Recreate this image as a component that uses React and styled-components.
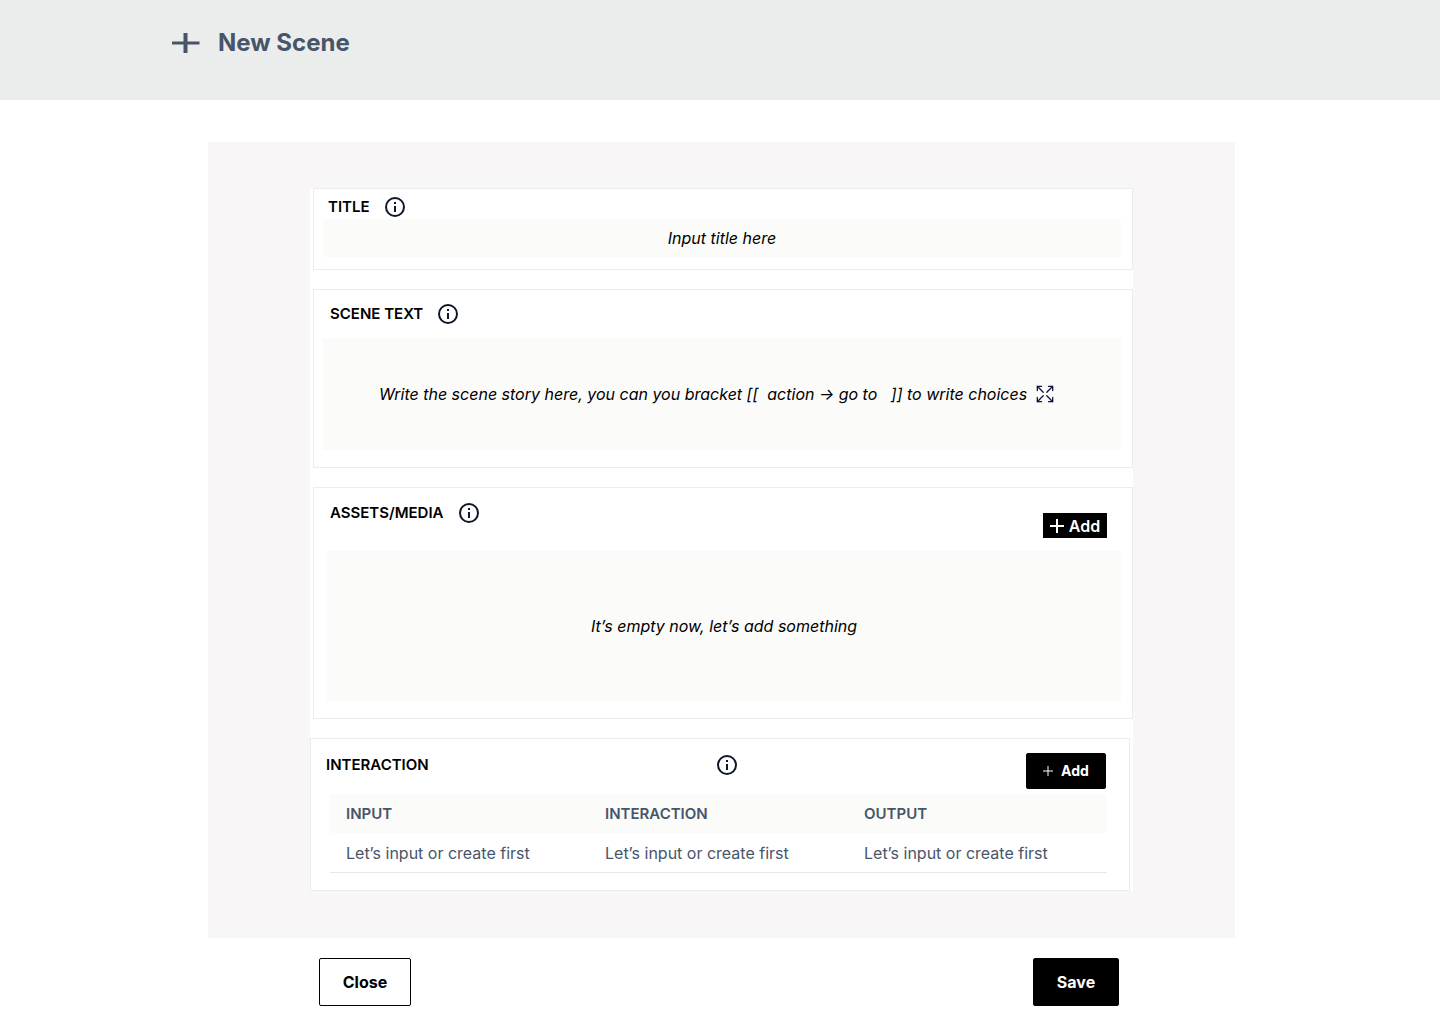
import React from "react";
import styled, { createGlobalStyle } from "styled-components";

const GlobalStyle = createGlobalStyle`
  *, *::before, *::after { box-sizing: border-box; }
  body {
    margin: 0;
    background: #ffffff;
    color: #000000;
    font-family: Inter, "Liberation Sans", sans-serif;
    font-size: 16px;
    line-height: 24px;
  }
  button, input, textarea { font: inherit; }
`;

const Header = styled.header`
  display: flex;
  align-items: center;
  gap: 18px;
  padding: 27px 171px 41px;
  background: #ebedec;
  color: #475569;
`;

const PageTitle = styled.h1`
  margin: 0;
  font-size: 24px;
  font-weight: 700;
  line-height: 32px;
`;

const Main = styled.main`
  padding: 42px 205px 18px 208px;
`;

const Panel = styled.div`
  padding: 46px 102px 47px;
  background: #f8f6f7;
`;

const Stack = styled.div`
  display: flex;
  flex-direction: column;
  gap: 19px;
  background: #ffffff;
`;

const Card = styled.section`
  margin: ${(p) => (p.$shift ? "0 3px 0 0" : "0 0 0 3px")};
  padding: ${(p) => p.$padding};
  border: 1px solid #ebedec;
`;

const CardHead = styled.div`
  display: flex;
  justify-content: space-between;
  align-items: ${(p) => p.$align || "center"};
  min-height: ${(p) => p.$height || "0"};
  padding: ${(p) => p.$padding};
`;

const LabelGroup = styled.div`
  display: flex;
  align-items: center;
  align-self: flex-start;
  gap: 13px;
`;

const label = `
  margin: 0;
  font-size: 15px;
  font-weight: 600;
  line-height: 24px;
`;

const FieldLabel = styled.label`
  ${label}
`;

const CardTitle = styled.h2`
  ${label}
`;

const IconButton = styled.button`
  display: flex;
  flex: none;
  padding: 0;
  border: 0;
  background: transparent;
  color: #0f172a;
  cursor: pointer;
`;

const TitleInput = styled.input`
  display: block;
  width: 100%;
  height: 38px;
  padding: 0 12px;
  border: 0;
  border-radius: 2px;
  background: #fbfbf9;
  text-align: center;
  &::placeholder {
    color: #000000;
    font-style: italic;
    opacity: 1;
  }
`;

const StoryField = styled.div`
  display: flex;
  align-items: center;
  gap: 4px;
  padding: 44px 66px 44px 56px;
  background: #fbfbf9;
`;

const StoryInput = styled.textarea`
  display: block;
  flex: 1;
  min-width: 0;
  height: 24px;
  padding: 0;
  border: 0;
  background: transparent;
  resize: none;
  overflow: hidden;
  &::placeholder {
    color: #000000;
    font-style: italic;
    opacity: 1;
  }
`;

const EmptyMedia = styled.p`
  display: flex;
  align-items: center;
  justify-content: center;
  min-height: 150px;
  margin: 0 0 0 4px;
  background: #fbfbf9;
  font-style: italic;
`;

const Button = styled.button`
  display: flex;
  align-items: center;
  justify-content: center;
  gap: ${(p) => p.$gap || "0"};
  min-width: ${(p) => p.$width};
  height: ${(p) => p.$height};
  padding: 0;
  border: 1px solid #000000;
  border-radius: ${(p) => (p.$square ? "0" : "2px")};
  background: ${(p) => (p.$outline ? "#ffffff" : "#000000")};
  color: ${(p) => (p.$outline ? "#000000" : "#ffffff")};
  font-size: ${(p) => (p.$small ? "14px" : "16px")};
  font-weight: ${(p) => (p.$square ? "600" : "700")};
  cursor: pointer;
`;

const Table = styled.table`
  width: 100%;
  border-collapse: separate;
  border-spacing: 0;
  table-layout: fixed;
  color: #475569;
  text-align: left;
`;

const HeadCell = styled.th`
  height: 39px;
  padding: 0 16px;
  background: #fbfbf9;
  font-size: 15px;
  font-weight: 600;
`;

const Cell = styled.td`
  height: 40px;
  padding: 0 16px;
  border-bottom: 1px solid #e2e8f0;
`;

const TableWrap = styled.div`
  padding: 0 3px 0 4px;
`;

const Footer = styled.footer`
  display: flex;
  justify-content: space-between;
  padding: 20px 116px 0 111px;
`;

function InfoButton({ about }) {
  return (
    <IconButton type="button" aria-label={`About ${about}`}>
      <svg width="24" height="24" viewBox="0 0 24 24" fill="none" aria-hidden="true">
        <circle cx="12" cy="12" r="9" stroke="currentColor" strokeWidth="2" />
        <path d="M11 7h2v2h-2zM11 11h2v6h-2z" fill="currentColor" />
      </svg>
    </IconButton>
  );
}

function HeaderPlus() {
  return (
    <svg width="29" height="20" viewBox="0 0 29 20" fill="currentColor" aria-hidden="true">
      <path d="M1 8.5h27.5v3H1zM12.5 0h4v20h-4z" />
    </svg>
  );
}

function Plus({ size, weight }) {
  const middle = size / 2;
  return (
    <svg width={size} height={size} viewBox={`0 0 ${size} ${size}`} aria-hidden="true">
      <path
        d={`M0 ${middle}H${size}M${middle} 0V${size}`}
        stroke="currentColor"
        strokeWidth={weight}
      />
    </svg>
  );
}

function ExpandIcon() {
  return (
    <svg
      width="20"
      height="20"
      viewBox="0 0 20 20"
      fill="none"
      stroke="#0b1440"
      strokeWidth="1.3"
      strokeLinecap="round"
      strokeLinejoin="round"
      aria-hidden="true"
    >
      <path d="M6.5 2.3H2.3v4.2M2.3 2.3l5.9 5.9M13.5 2.3h4.2v4.2M17.7 2.3l-5.9 5.9M6.5 17.7H2.3v-4.2M2.3 17.7l5.9-5.9M13.5 17.7h4.2v-4.2M17.7 17.7l-5.9-5.9" />
    </svg>
  );
}

const columns = ["INPUT", "INTERACTION", "OUTPUT"];

export default function App() {
  return (
    <>
      <GlobalStyle />
      <Header>
        <HeaderPlus />
        <PageTitle>New Scene</PageTitle>
      </Header>
      <Main>
        <Panel>
          <Stack>
            <Card $padding="6px 11px 12px 9px">
              <CardHead $padding="0 0 0 5px">
                <LabelGroup>
                  <FieldLabel htmlFor="scene-title">TITLE</FieldLabel>
                  <InfoButton about="title" />
                </LabelGroup>
              </CardHead>
              <TitleInput id="scene-title" type="text" placeholder="Input title here" />
            </Card>

            <Card $padding="0 11px 17px 9px">
              <CardHead $padding="12px 0 12px 7px">
                <LabelGroup>
                  <FieldLabel htmlFor="scene-text">SCENE TEXT</FieldLabel>
                  <InfoButton about="scene text" />
                </LabelGroup>
              </CardHead>
              <StoryField>
                <StoryInput
                  id="scene-text"
                  rows={1}
                  placeholder={
                    "Write the scene story here, you can you bracket [[  action → go to   ]] to write choices"
                  }
                />
                <IconButton type="button" aria-label="Expand editor">
                  <ExpandIcon />
                </IconButton>
              </StoryField>
            </Card>

            <Card $padding="0 11px 17px 9px">
              <CardHead $align="flex-end" $height="63px" $padding="13px 14px 13px 7px">
                <LabelGroup>
                  <CardTitle>ASSETS/MEDIA</CardTitle>
                  <InfoButton about="assets and media" />
                </LabelGroup>
                <Button type="button" $square $width="64px" $height="25px" $gap="5px">
                  <Plus size={14} weight={2} />
                  Add
                </Button>
              </CardHead>
              <EmptyMedia>It’s empty now, let’s add something</EmptyMedia>
            </Card>

            <Card $shift $padding="0 19px 17px 15px">
              <CardHead $align="flex-start" $padding="14px 4px 5px 0">
                <CardTitle>INTERACTION</CardTitle>
                <InfoButton about="interaction" />
                <Button type="button" $small $width="80px" $height="36px" $gap="8px">
                  <Plus size={10} weight={1} />
                  Add
                </Button>
              </CardHead>
              <TableWrap>
                <Table>
                  <thead>
                    <tr>
                      {columns.map((name) => (
                        <HeadCell key={name} scope="col">
                          {name}
                        </HeadCell>
                      ))}
                    </tr>
                  </thead>
                  <tbody>
                    <tr>
                      {columns.map((name) => (
                        <Cell key={name}>Let’s input or create first</Cell>
                      ))}
                    </tr>
                  </tbody>
                </Table>
              </TableWrap>
            </Card>
          </Stack>
        </Panel>
        <Footer>
          <Button type="button" $outline $width="92px" $height="48px">
            Close
          </Button>
          <Button type="button" $width="86px" $height="48px">
            Save
          </Button>
        </Footer>
      </Main>
    </>
  );
}
